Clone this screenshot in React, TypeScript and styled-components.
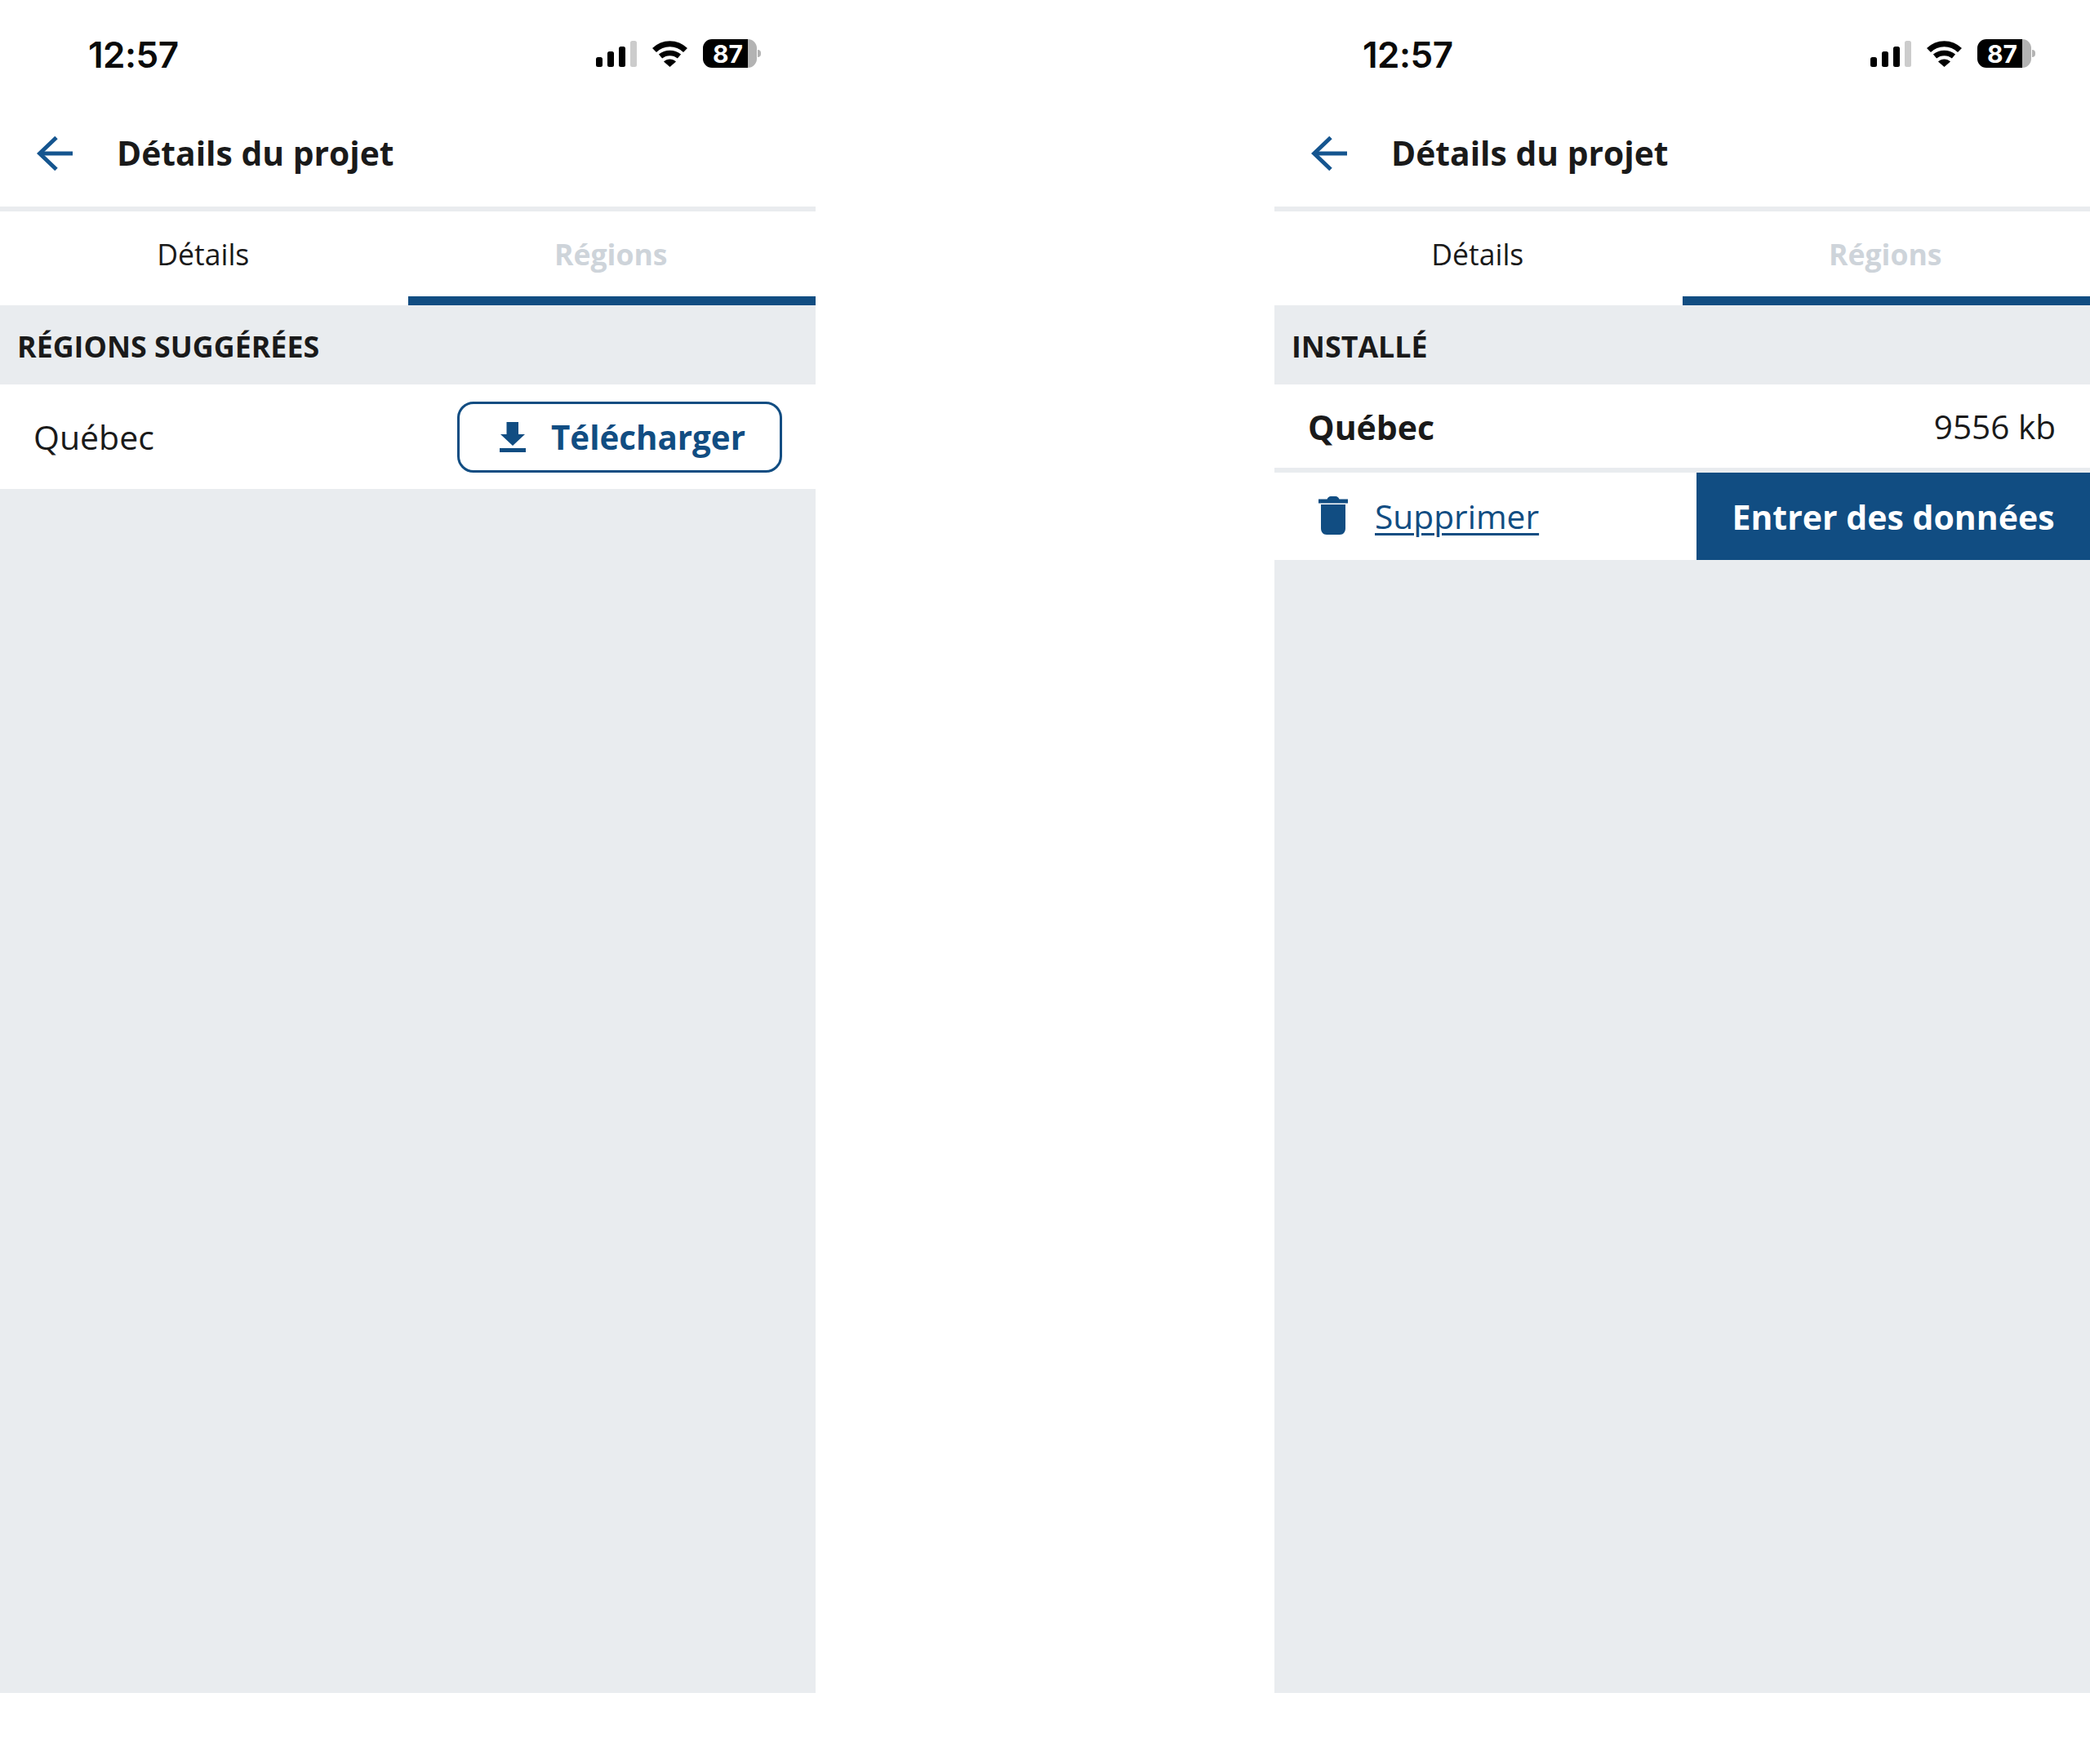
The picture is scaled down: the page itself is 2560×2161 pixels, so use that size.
import React from "react";
import styled, { createGlobalStyle } from "styled-components";

const BLUE = "#114d82";
const GRAY = "#e9ecef";
const INK = "#1a1a1a";

const Global = createGlobalStyle`
  html, body { margin: 0; padding: 0; background: #fff; }
  body { font-family: "Open Sans", "Liberation Sans", sans-serif; color: ${INK}; }
  * { box-sizing: border-box; }
`;

const Page = styled.div`
  width: 2560px;
  height: 2161px;
  display: flex;
  justify-content: space-between;
  align-items: flex-start;
`;

const Phone = styled.section`
  width: 999px;
  height: 2074px;
  display: flex;
  flex-direction: column;
  background: ${GRAY};
`;

const StatusBar = styled.div`
  height: 130px;
  background: #fff;
  display: flex;
  align-items: flex-start;
  justify-content: space-between;
  padding: 48px 67px 0 108px;
`;

const Time = styled.span`
  font-family: Inter, "Liberation Sans", sans-serif;
  font-weight: 600;
  font-size: 44px;
  line-height: 39px;
  letter-spacing: -0.5px;
  color: #0a0a0a;
`;

const StatusIcons = styled.div`
  display: flex;
  align-items: center;
  height: 35px;
  gap: 19px;
`;

const Battery = styled.div`
  display: flex;
  align-items: center;
  gap: 1px;
`;

const BatteryBody = styled.div`
  width: 66px;
  height: 35px;
  border-radius: 11px;
  background: linear-gradient(to right, #000 83%, #b3b3b3 83%);
  color: #fff;
  font-family: Inter, "Liberation Sans", sans-serif;
  font-weight: 700;
  font-size: 30px;
  line-height: 36px;
  padding-left: 12px;
`;

const BatteryNub = styled.div`
  width: 4px;
  height: 9px;
  background: #b3b3b3;
  border-radius: 0 4px 4px 0;
`;

const Header = styled.header`
  height: 123px;
  background: #fff;
  display: flex;
  align-items: center;
  padding: 0 0 8px 45px;
  gap: 54px;
`;

const Title = styled.h1`
  margin: 0 0 2px;
  font-size: 40.8px;
  font-weight: 700;
  line-height: 56px;
  color: ${INK};
`;

const Divider = styled.div`
  height: 6px;
  background: ${GRAY};
`;

const Tabs = styled.nav`
  height: 115px;
  display: grid;
  grid-template-columns: 1fr 1fr;
  background: #fff;
`;

const Tab = styled.div<{ $active?: boolean }>`
  display: flex;
  align-items: flex-start;
  justify-content: center;
  padding: 27px 2px 0 0;
  font-size: 35.6px;
  line-height: 50px;
  font-weight: ${(p) => (p.$active ? 700 : 400)};
  color: ${(p) => (p.$active ? "#ced4da" : INK)};
  border-bottom: 11px solid ${(p) => (p.$active ? BLUE : "#fff")};
`;

const SectionLabel = styled.h2`
  margin: 0;
  height: 97px;
  display: flex;
  align-items: center;
  padding: 2px 0 0 21px;
  font-size: 35.8px;
  font-weight: 700;
  color: ${INK};
  text-transform: uppercase;
`;

const SuggestedRow = styled.div`
  height: 128px;
  background: #fff;
  display: flex;
  align-items: center;
  justify-content: space-between;
  padding: 0 41px;
`;

const RegionName = styled.span<{ $bold?: boolean }>`
  font-size: 41px;
  line-height: 56px;
  font-weight: ${(p) => (p.$bold ? 700 : 400)};
  color: ${INK};
`;

const OutlineButton = styled.button`
  width: 398px;
  height: 87px;
  padding: 0 0 0 49px;
  display: flex;
  align-items: center;
  gap: 31px;
  background: #fff;
  border: 3px solid ${BLUE};
  border-radius: 20px;
  font-family: inherit;
  font-size: 40.3px;
  font-weight: 700;
  color: ${BLUE};
`;

const InstalledRow = styled.div`
  height: 102px;
  background: #fff;
  display: flex;
  align-items: center;
  justify-content: space-between;
  padding: 2px 42px 0 41px;
`;

const Size = styled.span`
  font-size: 40.5px;
  line-height: 56px;
  color: ${INK};
`;

const RowDivider = styled.div`
  height: 6px;
  background: ${GRAY};
`;

const ActionRow = styled.div`
  height: 107px;
  background: #fff;
  display: flex;
  align-items: stretch;
  justify-content: space-between;
`;

const DeleteLink = styled.a`
  display: flex;
  align-items: center;
  gap: 33px;
  padding: 0 0 2px 54px;
  font-size: 40.7px;
  color: ${BLUE};
  text-decoration: underline;
  text-decoration-thickness: 3px;
  text-underline-offset: 5px;
`;

const PrimaryButton = styled.button`
  width: 482px;
  border: 0;
  background: ${BLUE};
  color: #fff;
  font-family: inherit;
  font-size: 41px;
  font-weight: 700;
`;

const StatusRow = () => (
  <StatusBar>
    <Time>12:57</Time>
    <StatusIcons>
      <svg width="50" height="32" viewBox="0 0 50 32">
        <rect x="0" y="20" width="8" height="12" rx="2.5" fill="#000" />
        <rect x="14" y="13" width="8" height="19" rx="2.5" fill="#000" />
        <rect x="28" y="7" width="8" height="25" rx="2.5" fill="#000" />
        <rect x="42" y="0" width="8" height="32" rx="2.5" fill="#ccc" />
      </svg>
      <svg width="43" height="32" viewBox="0 0 43 32">
        <path d="M2.500 11.500C13 1 30 1 40.500 11.500" fill="none" stroke="#000" strokeWidth="7" />
        <path d="M10 19C16.500 13.500 26.500 13.500 33 19" fill="none" stroke="#000" strokeWidth="6.500" />
        <path d="M14 25.500C18 21.500 25 21.500 29 25.500L21.500 32Z" fill="#000" />
      </svg>
      <Battery>
        <BatteryBody>87</BatteryBody>
        <BatteryNub />
      </Battery>
    </StatusIcons>
  </StatusBar>
);

const BackArrow = () => (
  <svg width="44" height="44" viewBox="0 0 44 44" fill="none" stroke="#15558f" strokeWidth="5">
    <path d="M44 22H4" />
    <path d="M24 2.500L3.500 22L24 41.500" />
  </svg>
);

const DownloadIcon = () => (
  <svg width="32" height="37" viewBox="0 0 32 37" fill={BLUE}>
    <path d="M8.500 0H23V15H31L16 29L1 15H8.500Z" />
    <rect x="0" y="32" width="32" height="5" />
  </svg>
);

const TrashIcon = () => (
  <svg width="36" height="47" viewBox="0 0 36 47" fill={BLUE}>
    <path d="M0 3.500H10.500C11.500 1.500 13 0 15 0H21C23 0 24.500 1.500 25.500 3.500H36V8.500H0Z" />
    <path d="M3 10H33V39C33 43.500 30.500 47 26 47H10C5.500 47 3 43.500 3 39Z" />
  </svg>
);

const Top = () => (
  <>
    <StatusRow />
    <Header>
      <BackArrow />
      <Title>Détails du projet</Title>
    </Header>
    <Divider />
    <Tabs>
      <Tab>Détails</Tab>
      <Tab $active>Régions</Tab>
    </Tabs>
  </>
);

export default function App() {
  return (
    <>
      <Global />
      <Page>
        <Phone>
          <Top />
          <SectionLabel>Régions suggérées</SectionLabel>
          <SuggestedRow>
            <RegionName>Québec</RegionName>
            <OutlineButton>
              <DownloadIcon />
              Télécharger
            </OutlineButton>
          </SuggestedRow>
        </Phone>
        <Phone>
          <Top />
          <SectionLabel>Installé</SectionLabel>
          <InstalledRow>
            <RegionName $bold>Québec</RegionName>
            <Size>9556 kb</Size>
          </InstalledRow>
          <RowDivider />
          <ActionRow>
            <DeleteLink>
              <TrashIcon />
              Supprimer
            </DeleteLink>
            <PrimaryButton>Entrer des données</PrimaryButton>
          </ActionRow>
        </Phone>
      </Page>
    </>
  );
}
